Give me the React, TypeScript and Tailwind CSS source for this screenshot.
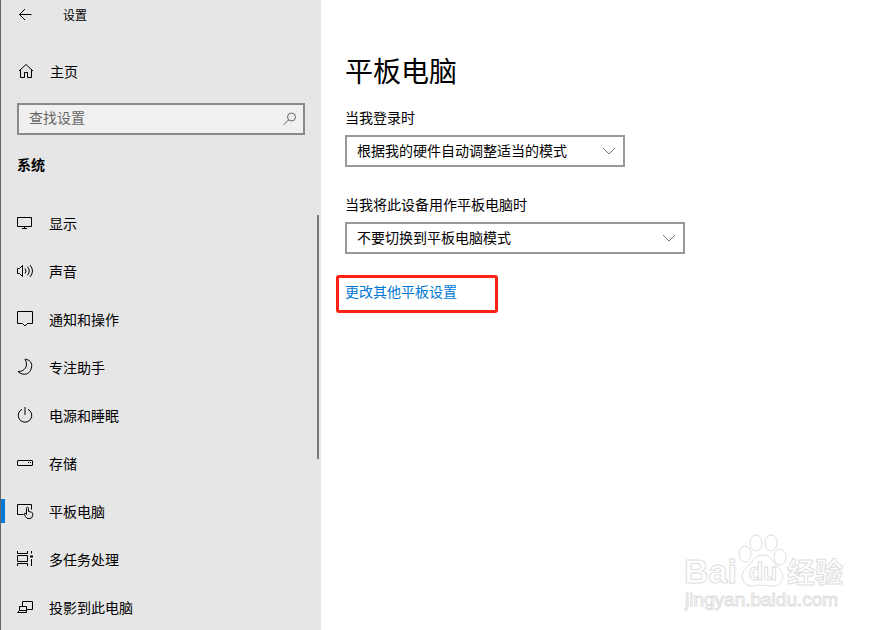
import React, { useState } from "react";

const icons = {
  display: (
    <>
      <path d="M.5 3.500h14v9H.5z" />
      <path d="M7.500 12.500v2M5 14.500h5" />
    </>
  ),
  sound: (
    <>
      <path d="M.5 6.500h2l3-3v11l-3-3h-2z" />
      <path d="M8 6.500q2 2.500 0 5M10.500 4.700q3.500 4.300 0 8.600M13 3q5 6 0 12" />
    </>
  ),
  notifications: <path d="M.5 1.500h15v12h-5L8 16l-2.500-2.500h-5z" />,
  focus: <path d="M8 1.200C13 1.700 15.300 5 14.600 9 13.700 16.500 6 18.500 1 13.500 7.500 13.800 12 8 8 1.200z" />,
  power: (
    <>
      <path d="M5 3.300a6.800 6.800 0 1 0 6 0" />
      <path d="M8 1v8" />
    </>
  ),
  storage: (
    <>
      <rect x=".5" y="6.500" width="15" height="5" rx=".5" />
      <path d="M11 8.500h1M13 8.500h1" />
    </>
  ),
  tablet: (
    <>
      <path d="M6.500 12.500H.5v-10h14v5" />
      <path d="M9.500 12.500v-6q0-1.200 1-1.200t1 1.200v3l3 .7q1.200.3 1.200 1.500v1.800q-.3 3.200-3.700 3.200-2.500 0-3.500-2L7.300 12.300q-.2-1.500 1-1.100l1.200 1.300" />
    </>
  ),
  multitask: (
    <>
      <path d="M.5 1v2.500h10V1M.5 5.500h10v6H.5zM.5 16v-2.500h10V16" />
      <path d="M14.500 1v2.500M14.500 9v7" />
      <path d="M13 5.500h3v2h-3z" fill="currentColor" stroke="none" />
    </>
  ),
  project: (
    <>
      <path d="M5.500 8V3.500h10v8h-6" />
      <path d="M2.500 8.500h7v4h-7zM2.500 12.500l-2 2h9v-2" />
    </>
  ),
};

const items: { label: string; icon: keyof typeof icons }[] = [
  { label: "显示", icon: "display" },
  { label: "声音", icon: "sound" },
  { label: "通知和操作", icon: "notifications" },
  { label: "专注助手", icon: "focus" },
  { label: "电源和睡眠", icon: "power" },
  { label: "存储", icon: "storage" },
  { label: "平板电脑", icon: "tablet" },
  { label: "多任务处理", icon: "multitask" },
  { label: "投影到此电脑", icon: "project" },
];

function Icon({ children }: { children: React.ReactNode }) {
  return (
    <svg
      width="18"
      height="18"
      viewBox="0 0 18 18"
      fill="none"
      stroke="currentColor"
      className="shrink-0"
      aria-hidden="true"
    >
      {children}
    </svg>
  );
}

function Dropdown(props: {
  id: string;
  label: string;
  options: string[];
  width: string;
}) {
  return (
    <div className="flex flex-col">
      <label htmlFor={props.id} className="mb-2 leading-5">
        {props.label}
      </label>
      <div className={"relative max-w-full " + props.width}>
        <select
          id={props.id}
          className="block h-8 w-full appearance-none border-2 border-[#999] bg-white pr-8 pb-[2px] pl-[10px] text-black outline-none"
        >
          {props.options.map((option) => (
            <option key={option}>{option}</option>
          ))}
        </select>
        <svg
          width="14"
          height="8"
          viewBox="0 0 14 8"
          fill="none"
          stroke="#777"
          className="pointer-events-none absolute top-3 right-[9px]"
          aria-hidden="true"
        >
          <path d="M1 1l6 6 6-6" />
        </svg>
      </div>
    </div>
  );
}

function Watermark() {
  return (
    <svg
      width="180"
      height="95"
      viewBox="0 0 180 95"
      fill="#fff"
      stroke="#dedede"
      className="pointer-events-none absolute right-[38px] bottom-[10px] font-['Liberation_Sans','Noto_Sans_CJK_SC',sans-serif]"
    >
      <text x="9" y="58" fontSize="34" fontWeight="700">Bai</text>
      <ellipse cx="70" cy="29" rx="6" ry="8" />
      <ellipse cx="81" cy="18" rx="6" ry="8" />
      <ellipse cx="96" cy="18" rx="6" ry="8" />
      <ellipse cx="105" cy="32" rx="6" ry="8" />
      <path d="M88 30c9 0 10 8 16 13 7 7 4 18-6 18-7 0-13-2-21 0-10 0-13-11-6-18 6-5 8-13 17-13z" />
      <text x="74" y="55" fontSize="23" fontWeight="700">du</text>
      <text x="112" y="58" fontSize="28" fontWeight="700">经验</text>
      <text x="10" y="81" fontSize="19">jingyan.baidu.com</text>
    </svg>
  );
}

export default function App() {
  const [active, setActive] = useState("平板电脑");

  return (
    <div className="relative flex h-screen overflow-hidden bg-white font-['Noto_Sans_CJK_SC',sans-serif] text-sm text-black">
      <aside className="flex w-[321px] shrink-0 flex-col border-l border-[#666] bg-[#e6e6e6]">
        <header className="flex h-[30px] items-center gap-7 pl-4 text-xs">
          <button aria-label="返回">
            <Icon>
              <path d="M14.500 8.500H2.500M8 3L2.500 8.500 8 14" />
            </Icon>
          </button>
          <span>设置</span>
        </header>
        <button className="mt-[17px] flex h-12 items-center gap-[14px] pl-[17px]">
          <Icon>
            <path d="M1 9l7-6.500L15 9M2.500 8v7.500h4v-5h3v5h4V8" />
          </Icon>
          <span>主页</span>
        </button>
        <div className="relative mx-4 mt-2">
          <input
            type="text"
            aria-label="查找设置"
            placeholder="查找设置"
            className="block h-8 w-full border-2 border-[#8a8a8a] bg-[#f0f0f0] pr-8 pb-1 pl-[10px] outline-none placeholder:text-[#666]"
          />
          <svg
            width="14"
            height="14"
            viewBox="0 0 14 14"
            fill="none"
            stroke="#666"
            className="absolute top-[9px] right-2"
            aria-hidden="true"
          >
            <circle cx="8.500" cy="5" r="4" />
            <path d="M5.700 7.800L.7 12.800" />
          </svg>
        </div>
        <h2 className="pt-[19px] pb-5 pl-4 leading-5 font-bold">系统</h2>

        <div className="relative mt-[5px] min-h-0 flex-1">
          <nav className="h-full overflow-hidden">
            {items.map((item) => (
              <a
                key={item.label}
                href="#"
                onClick={() => setActive(item.label)}
                className="relative flex h-12 items-center gap-[14px] pl-4"
              >
                {active === item.label && (
                  <span className="absolute top-3 left-0 h-6 w-1 bg-[#0078d7]" />
                )}
                <Icon>{icons[item.icon]}</Icon>
                <span>{item.label}</span>
              </a>
            ))}
          </nav>
          {/* scroll thumb */}
          <div className="absolute top-4 right-[2px] h-[244px] w-[2px] bg-[#7a7a7a]" />
        </div>
      </aside>

      <main className="min-w-0 flex-1 px-6 pt-[50px]">
        <h1 className="text-[28px] leading-10">平板电脑</h1>
        <div className="mt-[17px] flex flex-col gap-[27px]">
          <Dropdown
            id="sign-in"
            label="当我登录时"
            width="w-[280px]"
            options={["根据我的硬件自动调整适当的模式", "使用平板电脑模式", "使用桌面模式"]}
          />
          <Dropdown
            id="tablet-use"
            label="当我将此设备用作平板电脑时"
            width="w-[340px]"
            options={["不要切换到平板电脑模式", "始终切换到平板电脑模式"]}
          />
        </div>
        <div className="mt-[21px] -ml-[9px] h-[38px] w-[162px] rounded-[3px] border-3 border-[#ff2113] px-[6px] pt-[3px]">
          <a href="#" className="block leading-5 text-[#0078d7]">
            更改其他平板设置
          </a>
        </div>
      </main>

      <Watermark />
    </div>
  );
}
